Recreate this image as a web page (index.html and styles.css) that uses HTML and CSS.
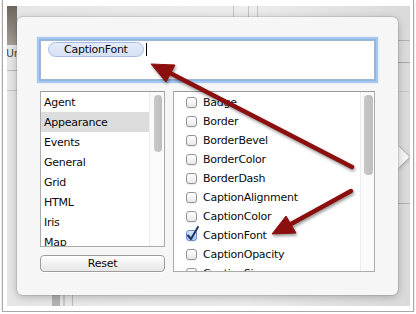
FILE: index.html
```html
<!DOCTYPE html>
<html lang="en">
<head>
  <meta charset="UTF-8" />
  <title>Caption properties</title>
  <link rel="stylesheet" href="styles.css">
</head>
<body>

<div class="frame">
  <div class="shot">
    <div class="win-label">Ur</div>

    <div class="popover">
      <div class="tokens">
        <span class="token">CaptionFont</span><span class="caret"></span>
      </div>

      <div class="panes">
        <div class="left">
          <div class="list groups">
            <ul>
              <li>Agent</li>
              <li class="selected">Appearance</li>
              <li>Events</li>
              <li>General</li>
              <li>Grid</li>
              <li>HTML</li>
              <li>Iris</li>
              <li>Map</li>
            </ul>
            <div class="scroll"><span class="thumb"></span></div>
          </div>
          <button class="reset">Reset</button>
        </div>

        <div class="list props">
          <ul>
            <li><span class="check"></span>Badge</li>
            <li><span class="check"></span>Border</li>
            <li><span class="check"></span>BorderBevel</li>
            <li><span class="check"></span>BorderColor</li>
            <li><span class="check"></span>BorderDash</li>
            <li><span class="check"></span>CaptionAlignment</li>
            <li><span class="check"></span>CaptionColor</li>
            <li><span class="check on"><svg width="13" height="15" viewBox="0 0 13 15"><path d="M2 9.5 L5 13 L12 1" fill="none" stroke="#1c3562" stroke-width="2" stroke-linecap="round" stroke-linejoin="round"/></svg></span>CaptionFont</li>
            <li><span class="check"></span>CaptionOpacity</li>
            <li><span class="check"></span>CaptionSize</li>
          </ul>
          <div class="scroll"><span class="thumb"></span></div>
        </div>
      </div>
    </div>
  </div>
</div>

<!-- annotation arrows drawn over the screenshot -->
<svg class="arrows" width="416" height="314" viewBox="0 0 416 314">
  <g fill="#8c0f0f" stroke="#8c0f0f">
    <line x1="352" y1="167" x2="170" y2="73" stroke-width="4.5" stroke-linecap="round"/>
    <polygon points="151,64 175,65 166,82" stroke-width="1" stroke-linejoin="round"/>
    <line x1="351" y1="191" x2="291" y2="224" stroke-width="4.5" stroke-linecap="round"/>
    <polygon points="272,234 286,216 296,233" stroke-width="1" stroke-linejoin="round"/>
  </g>
</svg>

</body>
</html>
```

FILE: styles.css
```css
body {
  margin: 0;
  position: relative;
  background-color: #ffffff;
  font-family: 'DejaVu Sans', 'Liberation Sans', sans-serif;
  font-size: 11px;
  letter-spacing: -0.25px;
  color: #0a0a0a;
}

.frame {
  width: 412px;
  height: 312px;
  box-sizing: border-box;
  margin-left: 2px;
  padding: 6px 3px 5px 4px;
  background-color: #ffffff;
  border: 1px solid #a8a8a8;
  border-top: none;
  box-shadow: 0 1px 2px rgba(0, 0, 0, 0.2);
}

.shot {
  position: relative;
  z-index: 0;
  height: 300px;
  overflow: hidden;
  background:
    linear-gradient(#6c655e, #a49e97) 0 0 / 10px 39px no-repeat,
    linear-gradient(#b8b8b8, #b8b8b8) 0 64px / 10px 1px no-repeat,
    linear-gradient(#c4c4c4, #c4c4c4) 0 84px / 10px 1px no-repeat,
    linear-gradient(#c2c2c2, #c2c2c2) 226px 0 / 1px 11px no-repeat,
    linear-gradient(#c2c2c2, #c2c2c2) 241px 0 / 1px 11px no-repeat,
    linear-gradient(#c2c2c2, #c2c2c2) 250px 0 / 1px 11px no-repeat,
    linear-gradient(#b0b0b0, #b0b0b0) 391px 34px / 12px 1px no-repeat,
    linear-gradient(#a8a8a8, #a8a8a8) 391px 56px / 12px 1px no-repeat,
    linear-gradient(#c8c8c8, #c8c8c8) 391px 85px / 12px 1px no-repeat,
    linear-gradient(#b0b0b0, #b0b0b0) 391px 197px / 12px 1px no-repeat,
    linear-gradient(#b4b4b4, #b4b4b4) 45px 289px / 8px 11px no-repeat,
    linear-gradient(#c6c6c6, #c6c6c6) 56px 289px / 2px 11px no-repeat,
    linear-gradient(#bcbcbc, #bcbcbc) 65px 289px / 1px 11px no-repeat,
    linear-gradient(90deg, #e6e6e6, #ececec 60%, #dadada);
}

.win-label {
  padding-top: 41px;
  margin-left: -1px;
  line-height: 13px;
  color: #4a4a4a;
}

/* popover floats over the window */
.popover {
  position: absolute;
  left: 10px;
  top: 11px;
  width: 381px;
  height: 278px;
  box-sizing: border-box;
  padding: 23px;
  background-color: #f6f6f6;
  border-radius: 6px;
  box-shadow: 0 0 0 1px rgba(0, 0, 0, 0.08), 0 2px 8px rgba(0, 0, 0, 0.25);
}

.popover::after {
  content: "";
  position: absolute;
  right: -8px;
  top: 132px;
  width: 16px;
  height: 16px;
  background-color: #f6f6f6;
  transform: rotate(45deg);
  box-shadow: 1px -1px 0 rgba(0, 0, 0, 0.1), 2px 0 4px rgba(0, 0, 0, 0.15);
  z-index: -1;
}

.tokens {
  display: flex;
  align-items: flex-start;
  height: 40px;
  box-sizing: border-box;
  padding: 1px 7px;
  background-color: #ffffff;
  border: 1px solid #9fb7d6;
  box-shadow: 0 0 0 1px #8db6e4, 0 0 1px 3px #a6c8ee;
}

.token {
  height: 15px;
  box-sizing: border-box;
  padding: 0 15px;
  line-height: 13px;
  background: linear-gradient(#e4ecfa, #d6e1f6);
  border: 1px solid #a6bbe2;
  border-radius: 8px;
}

.caret {
  width: 1px;
  height: 13px;
  margin: 1px 0 0 2px;
  background-color: #000000;
}

.panes {
  display: grid;
  grid-template-columns: 125px 1fr;
  gap: 8px;
  height: 181px;
  margin-top: 11px;
}

.left {
  display: flex;
  flex-direction: column;
  gap: 8px;
}

.list {
  display: flex;
  overflow: hidden;
  background-color: #ffffff;
  border: 1px solid #ababab;
  border-top-color: #9a9a9a;
}

.list ul {
  flex: 1;
  margin: 0;
  padding: 0;
  list-style: none;
}

.groups {
  height: 156px;
  box-sizing: border-box;
}

.groups li {
  height: 20px;
  box-sizing: border-box;
  padding: 1px 0 0 3px;
  line-height: 20px;
}

.groups li.selected {
  background-color: #dcdcdc;
}

.scroll {
  width: 15px;
  box-sizing: border-box;
  padding: 3px 0 0 4px;
  background-color: #fafafa;
  border-left: 1px solid #ededed;
}

.thumb {
  display: block;
  width: 8px;
  height: 57px;
  border-radius: 4px;
  background: linear-gradient(90deg, #c9c9c9, #bdbdbd);
}

.reset {
  height: 17px;
  padding: 0;
  font-family: inherit;
  font-size: 11px;
  letter-spacing: -0.25px;
  color: #0a0a0a;
  background: linear-gradient(#ffffff, #f1f1f1 50%, #e7e7e7);
  border: 1px solid #9c9c9c;
  border-radius: 4px;
  box-shadow: 0 1px 0 rgba(255, 255, 255, 0.8);
}

.props ul {
  padding-top: 1px;
}

.props li {
  display: flex;
  align-items: center;
  height: 19px;
  padding-left: 12px;
  white-space: nowrap;
}

.props .scroll {
  width: 14px;
  padding-left: 3px;
}

.props .thumb {
  width: 9px;
  height: 80px;
}

.check {
  position: relative;
  flex-shrink: 0;
  width: 11px;
  height: 11px;
  box-sizing: border-box;
  margin-right: 6px;
  background: linear-gradient(#ffffff, #e9e9e9);
  border: 1px solid #939393;
  border-radius: 3px;
  box-shadow: 0 1px 1px rgba(0, 0, 0, 0.08);
}

.check.on {
  background: linear-gradient(#d8e7fa, #a9c7ee);
  border-color: #6f8fbf;
}

.check svg {
  position: absolute;
  left: -1px;
  top: -5px;
}

.arrows {
  position: absolute;
  left: 0;
  top: 0;
  pointer-events: none;
  filter: drop-shadow(1px 2px 1.5px rgba(0, 0, 0, 0.4));
}
```
